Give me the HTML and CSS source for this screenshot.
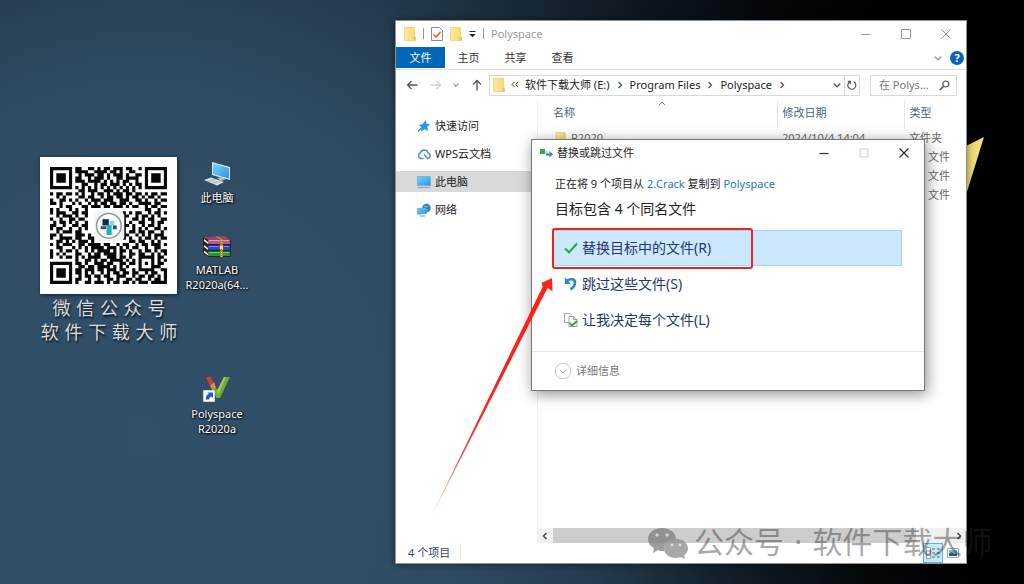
FILE: index.html
```html
<!DOCTYPE html>
<html lang="zh-CN">
<head>
    <meta charset="UTF-8">
    <meta name="viewport" content="width=device-width,initial-scale=1">
    <title>Polyspace</title>
    <link rel="stylesheet" href="styles.css">
</head>
<body>

    <svg width="0" height="0" class="defs" aria-hidden="true">
        <linearGradient id="screen" x1="0" y1="0" x2="1" y2="1">
            <stop offset="0" stop-color="#7fd0fb"/>
            <stop offset="1" stop-color="#2196e8"/>
        </linearGradient>
        <linearGradient id="paper" x1="0" y1="0" x2="1" y2="0">
            <stop offset="0" stop-color="#ffe8a0"/>
            <stop offset="1" stop-color="#fbd774"/>
        </linearGradient>
        <symbol id="folder" viewBox="0 0 12 14">
            <path d="M.5.5h10v9.500h1v3.500H.5z" fill="url(#paper)" stroke="#e9c65f" stroke-width=".6"/>
            <path d="M9.500 10h2v3.500h-2z" fill="#f3c44b"/>
        </symbol>
        <symbol id="chevR" viewBox="0 0 8 8"><path d="M2.500 1l3 3-3 3" fill="none" stroke="#555" stroke-width="1.300"/></symbol>
        <symbol id="chevD" viewBox="0 0 8 8"><path d="M.7 2.500L4 5.800l3.300-3.300" fill="none" stroke="currentColor" stroke-width="1.300"/></symbol>
    </svg>

    <main class="desktop">
        <svg class="flash" width="20" height="60" viewBox="0 0 20 60"><path d="M0 9L18 0 0 58z" fill="#f0df78"/></svg>

        <div class="qr">
            <svg id="qrCode" viewBox="0 0 37 37" shape-rendering="geometricPrecision">
                <path id="qrDots" fill="#080808"/>
                <rect x="14" y="14" width="9.500" height="9.500" rx="1.500" fill="#f3f4f5"/>
                <circle cx="18.600" cy="18.600" r="3.900" fill="#fff" stroke="#8797a0" stroke-width=".45"/>
                <path d="M16.600 16.500h2v2h-2z" fill="#14254e"/>
                <path d="M18.800 17h1.500v1.600h-1.500z" fill="#8bd5d2"/>
                <path d="M16 18.700h1.800v1H16zM19.900 18.500h1.200v1.200h-1.200z" fill="#27536e"/>
                <path d="M17.900 18.400h1.600v3.100h-1.600z" fill="#20aeb0"/>
            </svg>
        </div>
        <p class="qrText">微 信 公 众 号<br>软 件 下 载 大 师</p>

        <a href="#" class="shortcut pc">
            <svg width="28" height="26" viewBox="0 0 28 26">
                <path d="M9 1l18 5v13L9 14z" fill="#d6e8f2"/>
                <path d="M10 2.500l16 4.400v10.600l-16-4.400z" fill="url(#screen)"/>
                <path d="M14 17l5-1 4 2-5 2z" fill="#b8c1c7"/>
                <path d="M1 19l7-2.500L21 21l-7 3.500z" fill="#dfe4e7"/>
                <path d="M4 19l10 3.500M7 18l10 3.500M5 21l7-3M10 22.500l7-3" stroke="#a5afb6" stroke-width=".6"/>
            </svg>
            <span>此电脑</span>
        </a>
        <a href="#" class="shortcut rar">
            <svg width="30" height="24" viewBox="0 0 30 24">
                <path d="M1 2l22-1 6 4v17H7l-6-4z" fill="#2e2025"/>
                <path d="M1 2l22-1 5 3.500H6z" fill="#8d4c6d"/>
                <path d="M6 4.500h22V9H6z" fill="#b9578f"/>
                <path d="M6 10.500h22v4.500H6z" fill="#2545cf"/>
                <path d="M6 16.500h22V21H6z" fill="#1f9a35"/>
                <path d="M2 4l4 3v2L2 6zM2 10l4 3v2l-4-3zM2 15.500l4 3v2l-4-3z" fill="#f2e9ee"/>
                <path d="M7 5.500h20M7 11.500h20M7 17.500h20" stroke="#fff" stroke-opacity=".4"/>
                <path d="M13 1.500l5 3V22h3V4.500l-5-3z" fill="#b88231"/>
                <path d="M19.500 5v17" stroke="#f1d37b" stroke-dasharray="1 1"/>
                <path d="M17.500 10h4v5h-4z" fill="#e8dba9" stroke="#5b4722" stroke-width=".8"/>
            </svg>
            <span>MATLAB<br>R2020a(64...</span>
        </a>
        <a href="#" class="shortcut poly">
            <svg width="30" height="28" viewBox="0 0 30 28">
                <path d="M4 2h5l2 6-3 3z" fill="#d43f22"/>
                <path d="M8 11l4-4 2 6-3 3z" fill="#e58f45"/>
                <path d="M11 13l5 1L22 2h6L18 23h-4z" fill="#6fab35"/>
                <path d="M15 16L22 2h2L16 20z" fill="#a5cc62"/>
                <path d="M1.500 15.500h11v11h-11z" fill="#f7f9fb" stroke="#cbd3da"/>
                <path d="M4 24.500c-.5-3 .5-5 3-5.500L5.500 17.500H11V23l-1.500-1.500C8 22 7 23 7 24.500z" fill="#1e62b4"/>
            </svg>
            <span>Polyspace<br>R2020a</span>
        </a>

        <section class="explorer">
            <header class="titleBar">
                <svg width="12" height="14"><use href="#folder"/></svg>
                <i class="sep"></i>
                <svg class="check" width="12" height="14" viewBox="0 0 12 14">
                    <path d="M.5.5h8l3 3v10H.5z" fill="#fafafa" stroke="#8c8c8c"/>
                    <path d="M2.500 7.500l2.500 2.500 4.500-5" fill="none" stroke="#e2672c" stroke-width="1.600"/>
                </svg>
                <svg width="12" height="14"><use href="#folder"/></svg>
                <svg class="more" width="7" height="8" viewBox="0 0 7 8"><path d="M.5 1.500h6" stroke="#222"/><path d="M.3 4h6.400L3.500 7.300z" fill="#222"/></svg>
                <i class="sep"></i>
                <span class="winName">Polyspace</span>
                <div class="winBtns">
                    <button aria-label="最小化"><svg width="10" height="10"><path d="M.5 5.500h9" stroke="#999"/></svg></button>
                    <button aria-label="最大化"><svg width="10" height="10"><path d="M.5.5h9v9h-9z" fill="none" stroke="#999"/></svg></button>
                    <button aria-label="关闭"><svg width="10" height="10"><path d="M.5.500l9 9M9.500.5l-9 9" stroke="#999"/></svg></button>
                </div>
            </header>

            <nav class="tabs">
                <button class="tab file">文件</button>
                <button class="tab">主页</button>
                <button class="tab">共享</button>
                <button class="tab">查看</button>
                <svg class="fold" width="8" height="8"><use href="#chevD"/></svg>
                <button class="help" aria-label="帮助">?</button>
            </nav>

            <div class="addressRow">
                <div class="arrows">
                    <svg width="12" height="12" viewBox="0 0 12 12"><path d="M11.500 6H1.500M5.500 2l-4 4 4 4" fill="none" stroke="#555" stroke-width="1.300"/></svg>
                    <svg width="12" height="12" viewBox="0 0 12 12"><path d="M.5 6h10M6.500 2l4 4-4 4" fill="none" stroke="#d2d2d2" stroke-width="1.300"/></svg>
                    <svg width="6" height="6" viewBox="0 0 8 8"><use href="#chevD"/></svg>
                    <svg width="12" height="12" viewBox="0 0 12 12"><path d="M6 11.500v-10M2 5.500l4-4 4 4" fill="none" stroke="#555" stroke-width="1.300"/></svg>
                </div>
                <div class="address">
                    <svg width="12" height="14"><use href="#folder"/></svg>
                    <svg width="8" height="8" viewBox="0 0 8 8"><path d="M3.500 1l-2.500 2.500L3.500 6M7 1L4.500 3.500 7 6" fill="none" stroke="#333"/></svg>
                    <a href="#">软件下载大师 (E:)</a>
                    <svg width="8" height="8"><use href="#chevR"/></svg>
                    <a href="#">Program Files</a>
                    <svg width="8" height="8"><use href="#chevR"/></svg>
                    <a href="#">Polyspace</a>
                    <svg width="8" height="8"><use href="#chevR"/></svg>
                    <svg class="drop" width="8" height="8"><use href="#chevD"/></svg>
                    <button class="refresh" aria-label="刷新">
                        <svg width="10" height="10" viewBox="0 0 10 10"><path d="M6.800 1.800A4 4 0 1 1 3 1.700M3.300 4.200V1.300H.8" fill="none" stroke="#555" stroke-width="1.200"/></svg>
                    </button>
                </div>
                <label class="search">
                    <input type="text" placeholder="在 Polys..." aria-label="搜索">
                    <svg width="11" height="11" viewBox="0 0 11 11"><circle cx="6.800" cy="4" r="3" fill="none" stroke="#555" stroke-width="1.200"/><path d="M4.700 6.200L.8 10" stroke="#555" stroke-width="1.500"/></svg>
                </label>
            </div>

            <div class="content">
                <nav class="side">
                    <a href="#">
                        <svg width="14" height="14" viewBox="0 0 14 14"><path d="M8.500 1l1.200 3.800 3.600.4-3 2.600.8 4.200-3.600-1.800L4 12.500 4.600 8.600 2 6l3.800-1z" fill="#259be8"/><path d="M1 12.500l4-4" stroke="#259be8" stroke-width="1.500"/></svg>
                        快速访问
                    </a>
                    <a href="#">
                        <svg width="14" height="14" viewBox="0 0 14 14"><path d="M6.500 11.500H3.800A2.900 2.900 0 0 1 3.300 6 4 4 0 0 1 11 5.800a2.900 2.900 0 0 1-.4 5.700L7 7.500" fill="none" stroke="#4a86e8" stroke-width="1.400"/></svg>
                        WPS云文档
                    </a>
                    <a href="#" class="on">
                        <svg width="14" height="14" viewBox="0 0 14 14"><path d="M.5 1.500h13v9H.5z" fill="url(#screen)" stroke="#6da9cf" stroke-width=".7"/><path d="M1 12.500h12" stroke="#89a5bb" stroke-width="1.200"/></svg>
                        此电脑
                    </a>
                    <a href="#">
                        <svg width="14" height="14" viewBox="0 0 14 14"><circle cx="9.500" cy="5" r="4.200" fill="#2b7eb4"/><path d="M7 3l3 1 2-1M9 8l2-2" stroke="#9cd0ed" stroke-width=".8" fill="none"/><path d="M.5 5.500l9-1v6l-9 .8z" fill="url(#screen)" stroke="#4a98c4" stroke-width=".6"/><path d="M3 13h5" stroke="#6e96ad"/></svg>
                        网络
                    </a>
                </nav>

                <div class="pane">
                    <svg class="sort" width="8" height="5" viewBox="0 0 8 5"><path d="M.7 4.300L4 1l3.300 3.300" fill="none" stroke="#888"/></svg>
                    <table class="files">
                        <thead>
                            <tr><th class="colName">名称</th><th class="colDate">修改日期</th><th>类型</th></tr>
                        </thead>
                        <tbody>
                            <tr><td><svg width="12" height="13"><use href="#folder"/></svg>R2020</td><td>2024/10/4 14:04</td><td>文件夹</td></tr>
                            <tr><td></td><td></td><td class="ext">文件</td></tr>
                            <tr><td></td><td></td><td class="ext">文件</td></tr>
                            <tr><td></td><td></td><td class="ext">文件</td></tr>
                        </tbody>
                    </table>
                    <div class="scroll">
                        <svg width="8" height="8" viewBox="0 0 8 8"><path d="M5.500 1l-3 3 3 3" fill="none" stroke="#444" stroke-width="1.500"/></svg>
                        <i class="thumb"></i>
                        <svg width="8" height="8" viewBox="0 0 8 8"><path d="M2.500 1l3 3-3 3" fill="none" stroke="#444" stroke-width="1.500"/></svg>
                    </div>
                </div>
            </div>

            <footer class="status">
                <span class="count">4 个项目</span>
                <button class="view on" aria-label="详细信息视图">
                    <svg width="16" height="14" viewBox="0 0 16 14"><path d="M1.500 1.500h4v11h-4zM1.500 5h4M1.500 9h4" fill="#fff" stroke="#7a8b94" stroke-width=".8"/><path d="M7 3h3M12 3h3M7 7h3M12 7h3M7 11h3M12 11h3" stroke="#556d7a"/></svg>
                </button>
                <button class="view" aria-label="大图标视图">
                    <svg width="12" height="10" viewBox="0 0 12 10"><path d="M.5.5h11v9H.5z" fill="#fff" stroke="#9aa"/><path d="M2 2h8v6H2z" fill="#73b6e3"/><path d="M2 8V6l3-2 2 2 3-1v3z" fill="#285a84"/></svg>
                </button>
            </footer>
        </section>

        <section class="dialog" role="dialog" aria-labelledby="dlgName">
            <header class="dlgBar">
                <svg width="13" height="10" viewBox="0 0 13 10"><path d="M0 1h5v5H0z" fill="#35a853"/><path d="M5 3h3v3H5z" fill="#c9dccf"/><path d="M6 5.500h3.500V3L13 6.300 9.500 9.500V7.500H6z" fill="#2c82cf"/></svg>
                <span id="dlgName">替换或跳过文件</span>
                <div class="winBtns">
                    <button aria-label="最小化"><svg width="10" height="10"><path d="M.5 5.500h9" stroke="#333" stroke-width="1.200"/></svg></button>
                    <button aria-label="最大化" disabled><svg width="10" height="10"><path d="M1 1h8v8H1z" fill="none" stroke="#ccc"/></svg></button>
                    <button aria-label="关闭"><svg width="10" height="10"><path d="M.5.500l9 9M9.500.5l-9 9" stroke="#333" stroke-width="1.200"/></svg></button>
                </div>
            </header>
            <div class="dlgBody">
                <p class="from">正在将 9 个项目从 <a href="#">2.Crack</a> 复制到 <a href="#">Polyspace</a></p>
                <h1>目标包含 4 个同名文件</h1>
                <button class="choice on">
                    <svg width="14" height="14" viewBox="0 0 14 14"><path d="M1 7.500l4 3.800L13 2.500" fill="none" stroke="#27a43f" stroke-width="2"/></svg>
                    替换目标中的文件(R)
                    <i class="mark"></i>
                </button>
                <button class="choice">
                    <svg width="14" height="14" viewBox="0 0 14 14"><path d="M3 4c3.500-3 8-2 8 1.500 0 3-1.500 5-4.500 7" fill="none" stroke="#2e84ce" stroke-width="2.600"/><path d="M.8.5l2.400 2L6.500 7H.8z" fill="#2e84ce"/></svg>
                    跳过这些文件(S)
                </button>
                <button class="choice">
                    <svg width="14" height="14" viewBox="0 0 14 14"><path d="M.5.500h5.500l1 1v8H.5z" fill="#fff" stroke="#999" stroke-width=".9"/><path d="M5 3.500h4.500l3.500 3v7H5z" fill="#fff" stroke="#999" stroke-width=".9"/><path d="M9.500 3.500v3H13" fill="none" stroke="#999" stroke-width=".9"/><path d="M5.500 10l2.500 2.500 5-4.500" fill="none" stroke="#27a43f" stroke-width="1.800"/></svg>
                    让我决定每个文件(L)
                </button>
            </div>
            <footer class="dlgFoot">
                <button>
                    <svg width="18" height="18" viewBox="0 0 18 18"><circle cx="9" cy="9" r="7.800" fill="#fff" stroke="#c8c8c8"/><path d="M5.500 7.500L9 11l3.500-3.500" fill="none" stroke="#b5b5b5"/></svg>
                    详细信息
                </button>
            </footer>
        </section>

        <svg class="pointer" width="130" height="252" viewBox="0 0 130 252">
            <linearGradient id="fade" x1="0" y1="1" x2="0" y2="0">
                <stop offset="0" stop-color="#fb2a1c" stop-opacity="0"/>
                <stop offset=".3" stop-color="#e83a2e" stop-opacity=".9"/>
                <stop offset=".5" stop-color="#fb2316"/>
            </linearGradient>
            <path d="M1 249L118.500 7l4.500 2z" fill="url(#fade)"/>
            <path d="M127 0l.5 13-5-3-5-2-1-3z" fill="#fb2316"/>
        </svg>

        <div class="watermark">
            <svg width="40" height="34" viewBox="0 0 40 34">
                <path d="M14 2c8 0 14 5 14 11v1c-7-1-13 4-12 11-3 0-4 0-6-1l-5 3 1-5C2 20 0 17 0 13 0 7 6 2 14 2z" fill="#7d7d7d"/>
                <path d="M28 13c7 0 12 4 12 9.500 0 3-2 5.500-4 7l1 4-4-2.500c-9 3-17-2-17-8.500S21 13 28 13z" fill="#8b8b8b"/>
                <g fill="#d4d4d4"><circle cx="9" cy="9" r="1.700"/><circle cx="19" cy="9" r="1.700"/><circle cx="24" cy="19" r="1.400"/><circle cx="32" cy="19" r="1.400"/></g>
            </svg>
            <span>公众号 · 软件下载大师</span>
        </div>
    </main>

    <script src="qr.js"></script>
</body>
</html>
```
FILE: styles.css
```css
* {
    box-sizing: border-box;
}

body {
    margin: 0;
    font-family: "Noto Sans", "Noto Sans CJK SC", sans-serif;
    font-size: 11px;
    line-height: 16px;
    color: #222;
}

button {
    padding: 0;
    border: 0;
    background: none;
    font: inherit;
    color: inherit;
}

a {
    color: inherit;
    text-decoration: none;
}

svg {
    display: block;
    flex: none;
}

.defs {
    position: absolute;
}

.desktop {
    position: relative;
    min-height: 100vh;
    overflow: hidden;
    background: radial-gradient(ellipse 86% 160% at 14% 75%, #315069 0%, #2f4c63 38%, #233a4c 54%, #101b24 70%, #04080b 84%, #000 96%);
}

.flash {
    position: absolute;
    top: 137px;
    right: 38px;
}

/* desktop items */

.qr {
    position: absolute;
    left: 40px;
    top: 157px;
    width: 137px;
    padding: 10px;
    background: #fff;
    box-shadow: 1px 1px 4px rgba(0, 0, 0, .6);
}

.qrText {
    position: absolute;
    left: 36px;
    top: 297px;
    width: 146px;
    margin: 0;
    font-family: "DejaVu Sans", "Noto Sans CJK SC", sans-serif;
    font-size: 18px;
    line-height: 24px;
    text-align: center;
    white-space: nowrap;
    color: #dcdcdc;
    text-shadow: 1px 2px 2px #0c151d;
}

.shortcut {
    position: absolute;
    left: 177px;
    display: flex;
    flex-direction: column;
    align-items: center;
    gap: 3px;
    width: 80px;
    line-height: 15px;
    text-align: center;
    color: #fff;
    text-shadow: 1px 1px 2px #000, 0 0 2px #000;
}

.pc {
    top: 161px;
}

.rar {
    top: 235px;
}

.poly {
    top: 375px;
}

/* explorer window */

.explorer {
    position: absolute;
    left: 395px;
    right: 57px;
    top: 20px;
    bottom: 20px;
    display: flex;
    flex-direction: column;
    border: 1px solid #8c9298;
    background: #fff;
    box-shadow: 0 0 8px rgba(0, 0, 0, .5);
}

.titleBar {
    display: flex;
    align-items: center;
    gap: 7px;
    height: 25px;
    padding-left: 8px;
}

.sep {
    width: 1px;
    height: 11px;
    background: #999;
}

.winName {
    color: #999;
}

.winBtns {
    display: flex;
    margin-left: auto;
}

.winBtns button {
    display: flex;
    align-items: center;
    justify-content: center;
    width: 40px;
    height: 24px;
}

.tabs {
    display: flex;
    align-items: center;
    height: 24px;
    padding-right: 2px;
    border-bottom: 1px solid #e0e0e0;
}

.tab {
    width: 47px;
    height: 21px;
    color: #333;
}

.file {
    width: 49px;
    background: #0067b8;
    color: #fff;
}

.fold {
    margin-left: auto;
    color: #999;
}

.help {
    width: 14px;
    height: 14px;
    margin-left: 8px;
    border-radius: 50%;
    background: #0a64c0;
    color: #fff;
    font-weight: bold;
    line-height: 14px;
}

.addressRow {
    display: flex;
    align-items: center;
    gap: 10px;
    height: 30px;
    padding: 0 9px 0 10px;
}

.arrows {
    display: flex;
    align-items: center;
    justify-content: space-between;
    width: 77px;
    margin-right: -4px;
    color: #555;
}

.address {
    display: flex;
    flex: 1;
    align-items: center;
    gap: 6px;
    height: 21px;
    padding-left: 3px;
    border: 1px solid #d9d9d9;
    white-space: nowrap;
}

.drop {
    margin-left: auto;
    color: #555;
}

.refresh {
    display: flex;
    align-items: center;
    justify-content: center;
    align-self: stretch;
    width: 15px;
    margin-left: -3px;
    border-left: 1px solid #d9d9d9;
}

.search {
    display: flex;
    align-items: center;
    width: 87px;
    height: 21px;
    padding: 0 6px 0 8px;
    border: 1px solid #d9d9d9;
}

.search input {
    flex: 1;
    min-width: 0;
    padding: 0;
    border: 0;
    outline: 0;
    font: inherit;
}

.search input::placeholder {
    color: #777;
}

.content {
    display: flex;
    flex: 1;
    min-height: 0;
}

.side {
    display: flex;
    flex-direction: column;
    gap: 7px;
    width: 142px;
    padding-top: 15px;
    border-right: 1px solid #f2f2f2;
}

.side a {
    display: flex;
    align-items: center;
    gap: 4px;
    height: 21px;
    padding-left: 21px;
}

.side .on {
    background: #d9d9d9;
}

.pane {
    position: relative;
    display: flex;
    flex: 1;
    flex-direction: column;
    justify-content: space-between;
}

.sort {
    position: absolute;
    left: 120px;
    top: 1px;
}

.files {
    width: 100%;
    border-collapse: collapse;
    table-layout: fixed;
    color: #666;
}

.files th {
    height: 28px;
    padding: 0 5px 2px;
    border-right: 1px solid #e5e5e5;
    font-weight: normal;
    text-align: left;
    color: #4c607a;
}

.files th:last-child {
    border-right: 0;
}

.files .colName {
    width: 239px;
    padding-left: 15px;
}

.colDate {
    width: 127px;
}

.files td {
    height: 19px;
    padding: 0 5px;
    white-space: nowrap;
}

.files td:first-child {
    padding-left: 17px;
}

.files td svg {
    display: inline-block;
    margin-right: 4px;
    vertical-align: middle;
}

.files .ext {
    padding-left: 24px;
}

.scroll {
    display: flex;
    align-items: center;
    gap: 4px;
    height: 15px;
    padding: 0 3px;
    background: #f0f0f0;
}

.thumb {
    width: 86%;
    height: 15px;
    margin-right: auto;
    background: #cdcdcd;
}

.status {
    display: flex;
    align-items: center;
    height: 20px;
    padding: 0 3px 0 12px;
    color: #33475c;
}

.count {
    margin-right: auto;
    padding-right: 10px;
    border-right: 1px solid #eee;
}

.view {
    display: flex;
    align-items: center;
    justify-content: center;
    width: 20px;
    height: 20px;
}

.view.on {
    border: 1px solid #59b5d6;
    background: #c5e9f7;
}

/* replace or skip dialog */

.dialog {
    position: absolute;
    left: 531px;
    top: 139px;
    width: 394px;
    border: 1px solid #777;
    background: #fff;
    box-shadow: 2px 3px 14px rgba(0, 0, 0, .45);
}

.dlgBar {
    display: flex;
    align-items: center;
    gap: 4px;
    height: 25px;
    padding-left: 8px;
}

.dlgBody {
    padding: 11px 22px 13px 21px;
}

.from {
    margin: 0;
    padding-left: 2px;
}

.from a {
    color: #2878be;
}

.dlgBody h1 {
    margin: 7px 0 11px;
    padding-left: 2px;
    font-size: 14px;
    font-weight: normal;
    line-height: 20px;
}

.choice {
    position: relative;
    display: flex;
    align-items: center;
    gap: 4px;
    width: 100%;
    height: 36px;
    padding-left: 10px;
    border: 1px solid transparent;
    font-size: 14px;
    color: #26356a;
}

.choice.on {
    border-color: #a5d4f2;
    background: #cce8ff;
}

.mark {
    position: absolute;
    left: -2px;
    top: -3px;
    width: 201px;
    height: 41px;
    border: 2px solid #e8261f;
    border-radius: 3px;
}

.dlgFoot {
    display: flex;
    align-items: center;
    height: 39px;
    padding-left: 22px;
    border-top: 1px solid #e6e6e6;
    color: #777;
}

.dlgFoot button {
    display: flex;
    align-items: center;
    gap: 4px;
}

/* overlays */

.pointer {
    position: absolute;
    left: 425px;
    top: 278px;
}

.watermark {
    position: absolute;
    left: 648px;
    top: 525px;
    display: flex;
    align-items: center;
    gap: 6px;
    font-family: "DejaVu Sans", "Noto Sans CJK SC", sans-serif;
    font-size: 30px;
    line-height: 36px;
    white-space: nowrap;
    color: rgba(40, 40, 40, .42);
}

.watermark svg {
    opacity: .75;
}
```
FILE: qr.js
```js
var rows = [
    '#######.##..##.#.##.###.##..#.#######',
    '#.....#.####..####.##.#..##...#.....#',
    '#.###.#..#.###.##.#.###.#..##.#.###.#',
    '#.###.#.##..#.###.#..##.####..#.###.#',
    '#.###.#.###.####.#.#.#.##..#..#.###.#',
    '#.....#...##..#.##.###.#.#.##.#.....#',
    '#######.#.#.#.#.#.#.#.#.#.#.#.#######',
    '.........##.###..###.#.##.#..........',
    '#.##.##.#.#..#.##.#.###.##.##.#.##.##',
    '..#.#....##.##..#.##.##.#.##.#.##.#..',
    '#..##.#.#..#.###.###..###..##.#..#.##',
    '##.#...#.#..#.#.##.##.##.#..####.##..',
    '...#.##...##.###.##.###.#.##..#.##.##',
    '#.#...#.#..#..................##..#..',
    '#.###..##.##...........#.#.##..#.##.#',
    '..#.###.#..#...........##..#.##.#.#..',
    '#..#..##.##............#..##.#.##..##',
    '.#.##.#.#..#...........#.#..##..#.##.',
    '##..#..##.##...........##.#..#.##.#..',
    '#.##..#..#.#...........#..#.#.#..##.#',
    '..#.###.##.............#.##.##.##..#.',
    '##.#....###.#..........##..#.#.#.###.',
    '#..####.##..##.........#.#..#.##.#.##',
    '..##.#.#.###.#...........##.##..#.#..',
    '#.#.###..##.####.##..#.##..#.##.###.#',
    '..##...#.#.#.####.###.#.#.##..#..##..',
    '#..#.##.#..#.#.####.#.##.#..#.##.#.##',
    '#.#.#...##..#.##.####.#..##.##..#.#.#',
    '#..#.##.#.#.####..###.##.#..#####.##.',
    '........#..##.#.##.####.#.#.#...#.#.#',
    '#######.##.#..###.##..##.##.#.#.#.##.',
    '#.....#..##.##.####.#.#.#...#...###..',
    '#.###.#.##.###.##.###.##..#.#####..##',
    '#.###.#.##.#.#..#.#.##.##.##..#.##..#',
    '#.###.#..#.##.##.##..###..#.##.##.#.#',
    '#.....#.##..#..#..##.#..##.##..#.##.#',
    '#######.#..##.###.#.##.##.#.###.#####'
];

var d = '';

// merge neighbouring dark modules into one run
for (var y = 0; y < rows.length; y++) {
    var re = /#+/g, m;
    while ((m = re.exec(rows[y]))) {
        d += 'M' + m.index + ' ' + y + 'h' + m[0].length + 'v1h-' + m[0].length + 'z';
    }
}

document.getElementById('qrDots').setAttribute('d', d);
```
